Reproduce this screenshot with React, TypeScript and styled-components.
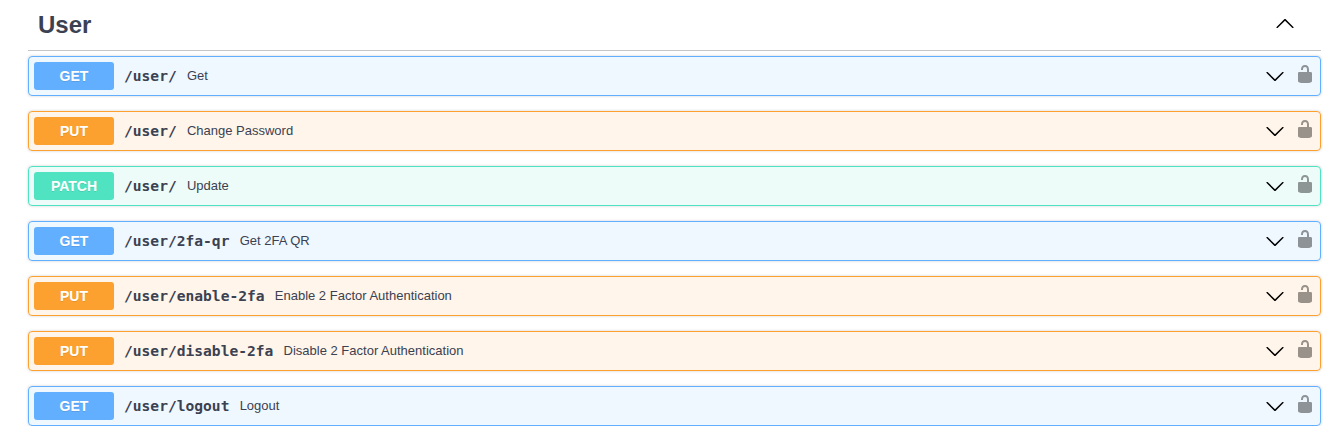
import React from 'react';
import styled, { createGlobalStyle } from 'styled-components';

const Global = createGlobalStyle`
  * { box-sizing: border-box; }
  body { margin: 0; background: #fff; color: #3b4151; font-family: "Liberation Sans", Arial, sans-serif; }
`;

const Section = styled.section`
  width: 1293px;
  margin-left: 28px;
`;

const TagHeader = styled.header`
  display: flex;
  align-items: center;
  justify-content: space-between;
  height: 51px;
  padding: 0 26px 4px 10px;
  border-bottom: 1px solid rgba(59, 65, 81, 0.3);
`;

const TagTitle = styled.h3`
  margin: 0;
  padding-top: 3px;
  font-size: 24px;
  line-height: 28px;
  font-weight: 700;
`;

const Operations = styled.div`
  display: flex;
  flex-direction: column;
  gap: 15px;
  padding-top: 5px;
`;

const palette = {
  GET: { main: '#61affe', tint: 'rgba(97, 175, 254, 0.1)' },
  PUT: { main: '#fca130', tint: 'rgba(252, 161, 48, 0.1)' },
  PATCH: { main: '#50e3c2', tint: 'rgba(80, 227, 194, 0.1)' },
};
type Verb = keyof typeof palette;

const Operation = styled.div<{ $verb: Verb }>`
  display: flex;
  align-items: center;
  height: 40px;
  padding: 0 5px;
  border: 1px solid ${p => palette[p.$verb].main};
  border-radius: 4px;
  background: ${p => palette[p.$verb].tint};
  box-shadow: 0 0 3px rgba(0, 0, 0, 0.19);
`;

const Method = styled.span<{ $verb: Verb }>`
  width: 80px;
  height: 28px;
  border-radius: 3px;
  background: ${p => palette[p.$verb].main};
  color: #fff;
  font-size: 14px;
  line-height: 28px;
  font-weight: 700;
  text-align: center;
  text-shadow: 0 1px 0 rgba(0, 0, 0, 0.1);
`;

const Path = styled.span`
  margin-left: 10px;
  font-family: "DejaVu Sans Mono", monospace;
  font-size: 14.6px;
  line-height: 18px;
  font-weight: 700;
`;

const Summary = styled.span`
  flex: 1;
  margin-left: 10.2px;
  font-size: 13px;
  line-height: 16px;
`;

const Chevron = styled.svg`
  width: 20px;
  height: 20px;
  flex: none;
`;

const Lock = styled.svg`
  width: 20px;
  height: 20px;
  margin: -4px 0 0 10px;
  flex: none;
  opacity: 0.4;
`;

const operations: { verb: Verb; path: string; summary: string }[] = [
  { verb: 'GET', path: '/user/', summary: 'Get' },
  { verb: 'PUT', path: '/user/', summary: 'Change Password' },
  { verb: 'PATCH', path: '/user/', summary: 'Update' },
  { verb: 'GET', path: '/user/2fa-qr', summary: 'Get 2FA QR' },
  { verb: 'PUT', path: '/user/enable-2fa', summary: 'Enable 2 Factor Authentication' },
  { verb: 'PUT', path: '/user/disable-2fa', summary: 'Disable 2 Factor Authentication' },
  { verb: 'GET', path: '/user/logout', summary: 'Logout' },
];

export default function App() {
  return (
    <>
      <Global />
      <Section>
        <TagHeader>
          <TagTitle>User</TagTitle>
          <Chevron viewBox="0 0 20 20">
            <path d="M 17.418 14.908 C 17.69 15.176 18.127 15.176 18.397 14.908 C 18.667 14.64 18.668 14.207 18.397 13.939 L 10.489 6.109 C 10.219 5.841 9.782 5.841 9.51 6.109 L 1.602 13.939 C 1.332 14.207 1.332 14.64 1.602 14.908 C 1.873 15.176 2.311 15.176 2.581 14.908 L 10 7.767 L 17.418 14.908 Z" />
          </Chevron>
        </TagHeader>
        <Operations>
          {operations.map(op => (
            <Operation key={op.verb + op.path} $verb={op.verb}>
              <Method $verb={op.verb}>{op.verb}</Method>
              <Path>{op.path}</Path>
              <Summary>{op.summary}</Summary>
              <Chevron viewBox="0 0 20 20">
                <path d="M17.418 6.109c.272-.268.709-.268.979 0s.271.701 0 .969l-7.908 7.83c-.27.268-.707.268-.979 0l-7.908-7.83c-.27-.268-.27-.701 0-.969.271-.268.709-.268.979 0L10 13.25l7.418-7.141z" />
              </Chevron>
              <Lock viewBox="0 0 20 20">
                <path d="M15.8 8H14V5.6C14 2.703 12.665 1 10 1 7.334 1 6 2.703 6 5.6V6h2v-.801C8 3.754 8.797 3 10 3c1.203 0 2 .754 2 2.199V8H4c-.553 0-1 .646-1 1.199V17c0 .549.428 1.139.951 1.307l1.197.387C5.672 18.861 6.55 19 7.1 19h5.8c.549 0 1.428-.139 1.951-.307l1.196-.387c.524-.167.953-.757.953-1.306V9.199C17 8.646 16.352 8 15.8 8z" />
              </Lock>
            </Operation>
          ))}
        </Operations>
      </Section>
    </>
  );
}
